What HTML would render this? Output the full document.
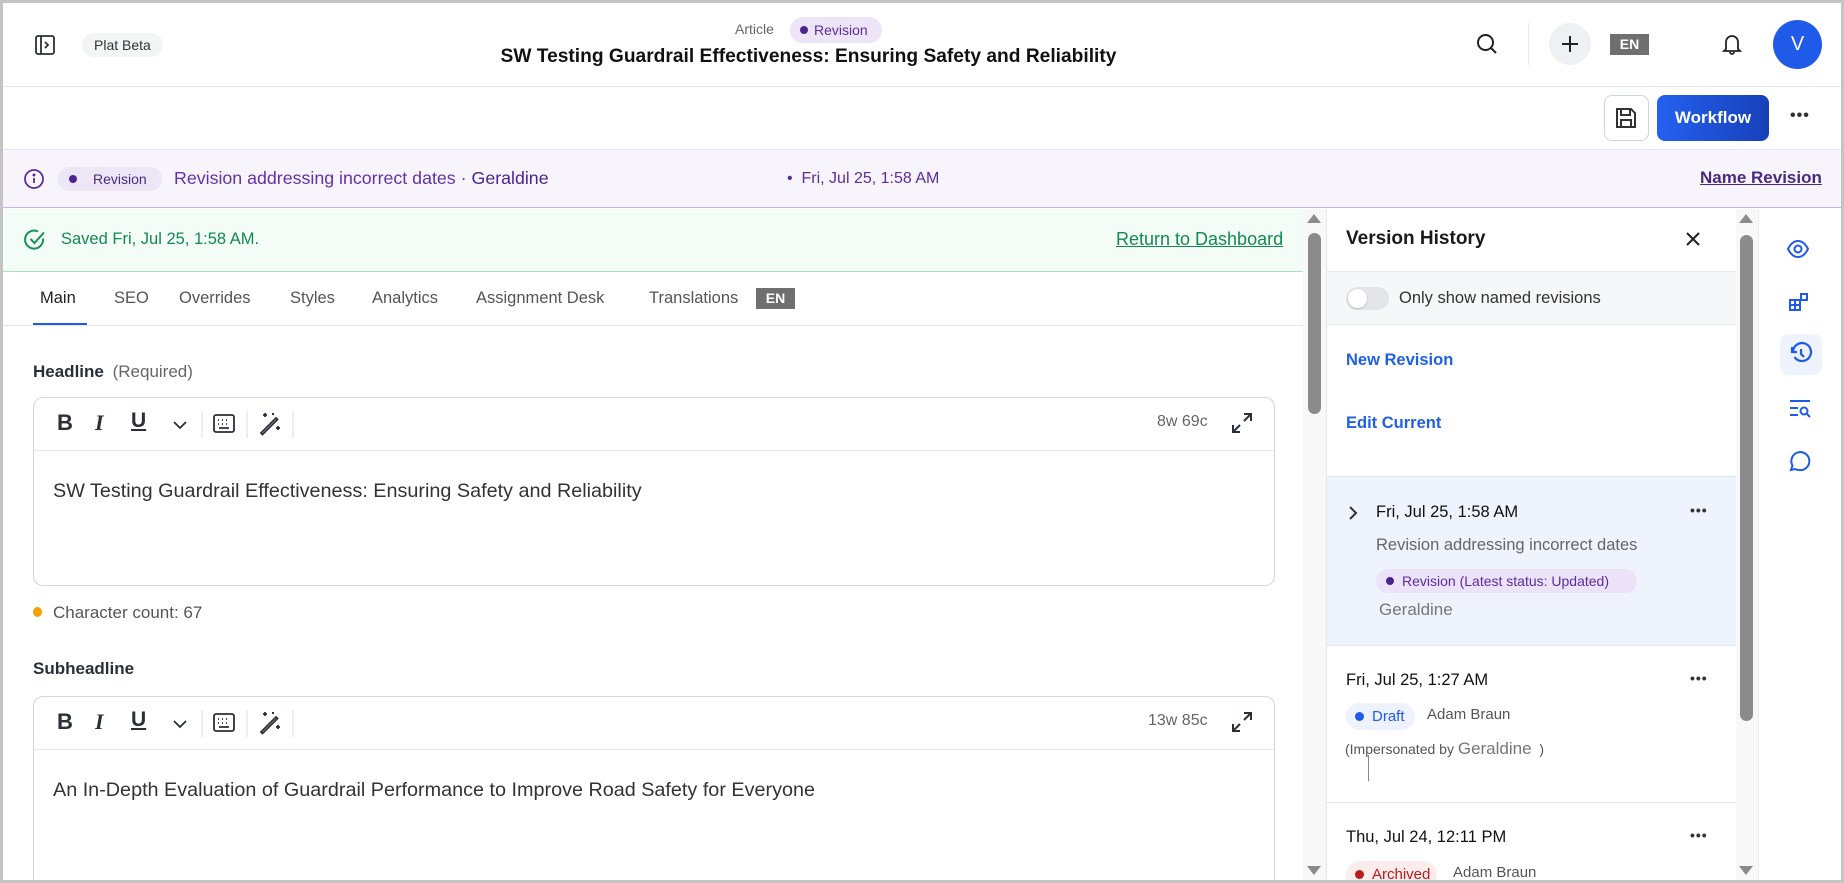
<!DOCTYPE html>
<html><head><meta charset="utf-8">
<style>
*{box-sizing:border-box;margin:0;padding:0}
html{width:1844px;height:883px;overflow:hidden}
body{width:1844px;height:883px;overflow:hidden;background:#fff;font-family:"Liberation Sans",sans-serif;color:#1f2430;position:relative}
.a{position:absolute;white-space:nowrap}
.frame{position:absolute;left:0;top:0;width:1844px;height:883px;border:3px solid #c4c4c4;pointer-events:none;z-index:50}
.hl{position:absolute;height:1px;background:#e4e6ea}
.pill{position:absolute;border-radius:14px;display:flex;align-items:center;white-space:nowrap}
.dot{display:inline-block;width:8px;height:8px;border-radius:50%;margin-right:8px}
svg{position:absolute;overflow:visible}
</style></head><body>
<div class="frame"></div>

<!-- header -->
<svg style="left:35px;top:35px" width="20" height="20" viewBox="0 0 20 20" fill="none" stroke="#2b2f38" stroke-width="1.8"><rect x="1" y="1" width="18" height="18" rx="2"/><line x1="6" y1="1" x2="6" y2="19"/><path d="M10 7l3 3-3 3"/></svg>
<div class="pill" style="left:82px;top:33px;height:24px;padding:0 12px;background:#f3f4f6;font-size:14px;color:#333">Plat Beta</div>
<div class="a" style="left:735px;top:21px;font-size:14px;color:#666">Article</div>
<div class="pill" style="left:790px;top:17px;height:26px;width:92px;padding-left:10px;background:#ede5f7;color:#5b2d9c;font-size:14px"><span class="dot" style="background:#4a2390;width:8px;height:8px;margin-right:6px"></span>Revision</div>
<div class="a" style="left:500px;top:46px;width:617px;text-align:center;font-size:19.2px;font-weight:bold;color:#111">SW Testing Guardrail Effectiveness: Ensuring Safety and Reliability</div>
<svg style="left:1476px;top:33px" width="22" height="22" viewBox="0 0 22 22" fill="none" stroke="#222" stroke-width="2"><circle cx="9.5" cy="9.5" r="7.5"/><line x1="15" y1="15" x2="20" y2="20"/></svg>
<div class="hl" style="left:1528px;top:23px;width:1px;height:42px;background:#e8e8e8"></div>
<div class="a" style="left:1549px;top:23px;width:42px;height:42px;border-radius:50%;background:#eef0f3"></div>
<svg style="left:1560px;top:34px" width="20" height="20" viewBox="0 0 20 20" stroke="#222" stroke-width="2"><line x1="10" y1="2" x2="10" y2="18"/><line x1="2" y1="10" x2="18" y2="10"/></svg>
<div class="a" style="left:1610px;top:34px;width:39px;height:21px;background:#6f6f6f;color:#fff;font-size:14px;font-weight:bold;text-align:center;line-height:21px">EN</div>
<svg style="left:1722px;top:33px" width="20" height="22" viewBox="0 0 20 22" fill="none" stroke="#222" stroke-width="1.8"><path d="M4 16V9a6 6 0 0112 0v7l2 2H2z"/><path d="M8 19a2 2 0 004 0"/></svg>
<div class="a" style="left:1773px;top:20px;width:49px;height:49px;border-radius:50%;background:#1f5ae8;color:#fff;font-size:20px;text-align:center;line-height:49px">V</div>
<div class="hl" style="left:3px;top:86px;width:1838px"></div>

<!-- toolbar -->
<div class="a" style="left:1604px;top:95px;width:45px;height:46px;border:1px solid #cfd3da;border-radius:8px"></div>
<svg style="left:1615px;top:107px" width="22" height="22" viewBox="0 0 22 22" fill="none" stroke="#333" stroke-width="2"><path d="M2 2h14l4 4v14H2z"/><rect x="6" y="2" width="9" height="6"/><rect x="6" y="13" width="10" height="7"/></svg>
<div class="a" style="left:1657px;top:95px;width:112px;height:46px;border-radius:8px;background:linear-gradient(90deg,#2461f0,#1740b8);color:#fff;font-size:17px;font-weight:bold;text-align:center;line-height:46px">Workflow</div>
<div class="a" style="left:1790px;top:107px;font-size:16px;font-weight:bold;color:#333;letter-spacing:1px">•••</div>
<div class="hl" style="left:3px;top:149px;width:1838px"></div>

<!-- revision banner -->
<div class="a" style="left:3px;top:150px;width:1838px;height:58px;background:#f7f5fb;border-bottom:1px solid #c7b4e8"></div>
<svg style="left:24px;top:169px" width="20" height="20" viewBox="0 0 20 20" fill="none" stroke="#5b2d9c" stroke-width="1.8"><circle cx="10" cy="10" r="9"/><line x1="10" y1="9" x2="10" y2="14"/><circle cx="10" cy="6" r=".6" fill="#5b2d9c"/></svg>
<div class="pill" style="left:58px;top:167px;height:24px;width:104px;padding-left:11px;background:#ece6f7;color:#4a2a80;font-size:14px"><span class="dot" style="background:#4a2390;margin-right:16px"></span>Revision</div>
<div class="a" style="left:174px;top:168px;font-size:17.8px;color:#6530a8">Revision addressing incorrect dates · <span style="color:#4a2390">Geraldine</span></div>
<div class="a" style="left:787px;top:170px;font-size:16px;color:#5b2d9c">• &nbsp;Fri, Jul 25, 1:58 AM</div>
<div class="a" style="left:1700px;top:168px;font-size:17px;font-weight:bold;color:#4a2a80;text-decoration:underline">Name Revision</div>

<!-- saved banner -->
<div class="a" style="left:3px;top:209px;width:1300px;height:63px;background:#f3fcf6;border-bottom:1px solid #a6e3bf"></div>
<svg style="left:24px;top:229px" width="22" height="22" viewBox="0 0 22 22" fill="none" stroke="#14925a" stroke-width="2"><path d="M19 9.5A9 9 0 1114 2.5"/><path d="M6.5 10l4 4L20 3.5"/></svg>
<div class="a" style="left:61px;top:230px;font-size:16.5px;color:#128a52">Saved Fri, Jul 25, 1:58 AM.</div>
<div class="a" style="left:1116px;top:229px;font-size:18px;color:#128a52;text-decoration:underline">Return to Dashboard</div>

<!-- tabs -->
<div class="a" style="left:40px;top:289px;font-size:16.5px;color:#222">Main</div>
<div class="a" style="left:33px;top:323px;width:54px;height:3px;background:#1f5ae8"></div>
<div class="a" style="left:114px;top:289px;font-size:16.5px;color:#555">SEO</div>
<div class="a" style="left:179px;top:289px;font-size:16.5px;color:#555">Overrides</div>
<div class="a" style="left:290px;top:289px;font-size:16.5px;color:#555">Styles</div>
<div class="a" style="left:372px;top:289px;font-size:16.5px;color:#555">Analytics</div>
<div class="a" style="left:476px;top:289px;font-size:16.5px;color:#555">Assignment Desk</div>
<div class="a" style="left:649px;top:289px;font-size:16.5px;color:#555">Translations</div>
<div class="a" style="left:756px;top:288px;width:39px;height:21px;background:#6f6f6f;color:#fff;font-size:14px;font-weight:bold;text-align:center;line-height:21px">EN</div>
<div class="hl" style="left:3px;top:325px;width:1300px"></div>

<!-- headline -->
<div class="a" style="left:33px;top:362px;font-size:17px;font-weight:bold;color:#2a2f3a">Headline <span style="font-weight:normal;color:#666;margin-left:4px">(Required)</span></div>
<div class="a" style="left:33px;top:397px;width:1242px;height:189px;border:1px solid #d3d6dc;border-radius:10px"></div>
<div class="hl" style="left:34px;top:450px;width:1240px"></div>
<div class="a" style="left:53px;top:480px;font-size:19.8px;color:#333">SW Testing Guardrail Effectiveness: Ensuring Safety and Reliability</div>
<div class="a" style="left:33px;top:607px;width:9px;height:10px;border-radius:50%;background:#f5a000"></div>
<div class="a" style="left:53px;top:603px;font-size:17px;color:#555">Character count: 67</div>

<!-- subheadline -->
<div class="a" style="left:33px;top:659px;font-size:17px;font-weight:bold;color:#2a2f3a">Subheadline</div>
<div class="a" style="left:33px;top:696px;width:1242px;height:200px;border:1px solid #d3d6dc;border-radius:10px"></div>
<div class="hl" style="left:34px;top:749px;width:1240px"></div>
<div class="a" style="left:53px;top:779px;font-size:19.8px;color:#333">An In-Depth Evaluation of Guardrail Performance to Improve Road Safety for Everyone</div>

<!-- scrollbars -->
<div class="a" style="left:1303px;top:209px;width:23px;height:674px;background:#f8f8f8"></div>
<div class="a" style="left:1308px;top:233px;width:13px;height:181px;border-radius:7px;background:#8b8b8b"></div>
<div class="a" style="left:1307px;top:214px;width:0;height:0;border-left:7px solid transparent;border-right:7px solid transparent;border-bottom:9px solid #8b8b8b"></div>
<div class="a" style="left:1307px;top:866px;width:0;height:0;border-left:7px solid transparent;border-right:7px solid transparent;border-top:9px solid #8b8b8b"></div>

<!-- version panel -->
<div class="a" style="left:1326px;top:209px;width:1px;height:674px;background:#e4e6ea"></div>
<div class="a" style="left:1346px;top:228px;font-size:19px;font-weight:bold;color:#1a1a1a">Version History</div>
<svg style="left:1686px;top:232px" width="14" height="14" viewBox="0 0 14 14" stroke="#222" stroke-width="2"><line x1="1" y1="1" x2="13" y2="13"/><line x1="13" y1="1" x2="1" y2="13"/></svg>
<div class="a" style="left:1327px;top:271px;width:409px;height:54px;background:#f6f7f9;border-top:1px solid #e4e6ea;border-bottom:1px solid #e4e6ea"></div>
<div class="a" style="left:1346px;top:287px;width:43px;height:23px;border-radius:12px;background:#e3e5e9"></div>
<div class="a" style="left:1348px;top:289px;width:19px;height:19px;border-radius:50%;background:#fff;box-shadow:0 1px 2px rgba(0,0,0,.2)"></div>
<div class="a" style="left:1399px;top:289px;font-size:16.5px;color:#333">Only show named revisions</div>
<div class="a" style="left:1346px;top:351px;font-size:16.5px;font-weight:bold;color:#2060e8">New Revision</div>
<div class="a" style="left:1346px;top:414px;font-size:16.5px;font-weight:bold;color:#2060e8">Edit Current</div>

<div class="a" style="left:1327px;top:476px;width:409px;height:170px;background:#eef3fd;border-top:1px solid #e2e6ee;border-bottom:1px solid #e2e6ee"></div>
<svg style="left:1348px;top:505px" width="10" height="16" viewBox="0 0 10 16" fill="none" stroke="#333" stroke-width="2"><path d="M2 2l6 6-6 6"/></svg>
<div class="a" style="left:1376px;top:503px;font-size:16.5px;color:#111">Fri, Jul 25, 1:58 AM</div>
<div class="a" style="left:1690px;top:502px;font-size:14px;font-weight:bold;color:#333;letter-spacing:1px">•••</div>
<div class="a" style="left:1376px;top:536px;font-size:16.5px;color:#666">Revision addressing incorrect dates</div>
<div class="pill" style="left:1376px;top:569px;height:24px;width:261px;padding-left:10px;background:#ece3f8;color:#5b2d9c;font-size:14px"><span class="dot" style="background:#4a2390"></span>Revision (Latest status: Updated)</div>
<div class="a" style="left:1379px;top:600px;font-size:17px;color:#777">Geraldine</div>

<div class="a" style="left:1346px;top:671px;font-size:16.5px;color:#111">Fri, Jul 25, 1:27 AM</div>
<div class="a" style="left:1690px;top:670px;font-size:14px;font-weight:bold;color:#333;letter-spacing:1px">•••</div>
<div class="pill" style="left:1346px;top:703px;height:27px;width:69px;padding-left:9px;background:#edf2fd;color:#1f5ae8;font-size:15px"><span class="dot" style="background:#1f5ae8;width:9px;height:9px"></span>Draft</div>
<div class="a" style="left:1427px;top:706px;font-size:15px;color:#555">Adam Braun</div>
<div class="a" style="left:1345px;top:739px;font-size:14px;color:#555">(Impersonated by <span style="font-size:17px;color:#777">Geraldine</span> &nbsp;)</div>
<div class="a" style="left:1368px;top:755px;width:1px;height:26px;background:#888"></div>
<div class="hl" style="left:1327px;top:802px;width:409px"></div>

<div class="a" style="left:1346px;top:828px;font-size:16.5px;color:#111">Thu, Jul 24, 12:11 PM</div>
<div class="a" style="left:1690px;top:827px;font-size:14px;font-weight:bold;color:#333;letter-spacing:1px">•••</div>
<div class="pill" style="left:1346px;top:861px;height:27px;width:91px;padding-left:9px;background:#fdecec;color:#b81c1c;font-size:15px"><span class="dot" style="background:#b81c1c;width:9px;height:9px"></span>Archived</div>
<div class="a" style="left:1453px;top:864px;font-size:15px;color:#555">Adam Braun</div>

<!-- panel scrollbar -->
<div class="a" style="left:1736px;top:209px;width:22px;height:674px;background:#f8f8f8"></div>
<div class="a" style="left:1740px;top:235px;width:13px;height:486px;border-radius:7px;background:#8b8b8b"></div>
<div class="a" style="left:1739px;top:214px;width:0;height:0;border-left:7px solid transparent;border-right:7px solid transparent;border-bottom:9px solid #8b8b8b"></div>
<div class="a" style="left:1739px;top:866px;width:0;height:0;border-left:7px solid transparent;border-right:7px solid transparent;border-top:9px solid #8b8b8b"></div>
<div class="a" style="left:1758px;top:209px;width:1px;height:674px;background:#eceef1"></div>

<!-- right rail -->
<svg style="left:1787px;top:240px" width="22" height="18" viewBox="0 0 22 18" fill="none" stroke="#1f5ae8" stroke-width="2"><path d="M1 9C4 3 8 1 11 1s7 2 10 8c-3 6-7 8-10 8S4 15 1 9z"/><circle cx="11" cy="9" r="3.5"/></svg>
<svg style="left:1789px;top:292px" width="20" height="20" viewBox="0 0 20 20" fill="none" stroke="#1f5ae8" stroke-width="2"><rect x="1" y="8" width="5" height="5"/><rect x="6" y="8" width="5" height="5"/><rect x="1" y="13" width="5" height="5"/><rect x="6" y="13" width="5" height="5"/><rect x="12" y="2" width="6" height="6"/></svg>
<div class="a" style="left:1780px;top:334px;width:42px;height:41px;border-radius:8px;background:#eef3fd"></div>
<svg style="left:1790px;top:343px" width="22" height="22" viewBox="0 0 22 22" fill="none" stroke="#1f5ae8" stroke-width="2.2"><path d="M2 4v5h5"/><path d="M3 9a9 9 0 111.5 5"/><path d="M11 6v5l3 3"/></svg>
<svg style="left:1789px;top:399px" width="22" height="18" viewBox="0 0 22 18" fill="none" stroke="#1f5ae8" stroke-width="2"><line x1="1" y1="2" x2="21" y2="2"/><line x1="1" y1="9" x2="9" y2="9"/><line x1="1" y1="16" x2="9" y2="16"/><circle cx="15" cy="12" r="3.5"/><line x1="18" y1="15" x2="21" y2="18"/></svg>
<svg style="left:1788px;top:450px" width="22" height="22" viewBox="0 0 22 22" fill="none" stroke="#1f5ae8" stroke-width="2"><path d="M3 20l1.5-4.5A9 9 0 1111 20a9 9 0 01-4-1z"/></svg>

<script>
function toolbar(top){
 var h='';
 h+='<div class="a" style="left:57px;top:'+(top+13)+'px;font-size:22px;font-weight:bold;color:#2b2f38">B</div>';
 h+='<div class="a" style="left:95px;top:'+(top+13)+'px;font-size:22px;font-style:italic;font-weight:bold;color:#2b2f38;font-family:Liberation Serif,serif">I</div>';
 h+='<div class="a" style="left:131px;top:'+(top+12)+'px;font-size:21px;font-weight:bold;color:#2b2f38;text-decoration:underline">U</div>';
 h+='<svg style="left:173px;top:'+(top+24)+'px" width="14" height="8" viewBox="0 0 14 8" fill="none" stroke="#2b2f38" stroke-width="1.8"><path d="M1 1l6 6 6-6"/></svg>';
 h+='<div class="a" style="left:201px;top:'+(top+14)+'px;width:2px;height:27px;background:#eee"></div>';
 h+='<svg style="left:213px;top:'+(top+17)+'px" width="22" height="19" viewBox="0 0 22 19" fill="none" stroke="#2b2f38" stroke-width="1.8"><rect x="1" y="1" width="20" height="17" rx="2"/><path d="M5 6h1M9 6h1M13 6h1M17 6h0M5 10h1M9 10h1M13 10h1M6 14h10"/></svg>';
 h+='<div class="a" style="left:246px;top:'+(top+14)+'px;width:2px;height:27px;background:#eee"></div>';
 h+='<svg style="left:259px;top:'+(top+15)+'px" width="23" height="23" viewBox="0 0 23 23" fill="none" stroke="#2b2f38" stroke-width="1.8"><path d="M2 21L17 6l1.5 1.5L3.5 22.5z"/><path d="M6 1v4M4 3h4M19 14v4M17 16h4M14 1v2M13 2h2"/></svg>';
 h+='<div class="a" style="left:292px;top:'+(top+14)+'px;width:2px;height:27px;background:#eee"></div>';
 return h;
}
var c=document.createElement('div');
c.innerHTML=toolbar(397)+toolbar(696)
 +'<div class="a" style="left:1157px;top:413px;font-size:16px;color:#666">8w 69c</div>'
 +'<div class="a" style="left:1148px;top:712px;font-size:16px;color:#666">13w 85c</div>'
 +'<svg style="left:1232px;top:413px" width="20" height="20" viewBox="0 0 20 20" fill="none" stroke="#2b2f38" stroke-width="2"><path d="M12 1h7v7M19 1l-7 7M8 19H1v-7M1 19l7-7"/></svg>'
 +'<svg style="left:1232px;top:712px" width="20" height="20" viewBox="0 0 20 20" fill="none" stroke="#2b2f38" stroke-width="2"><path d="M12 1h7v7M19 1l-7 7M8 19H1v-7M1 19l7-7"/></svg>';
document.body.appendChild(c);
</script>
</body></html>
